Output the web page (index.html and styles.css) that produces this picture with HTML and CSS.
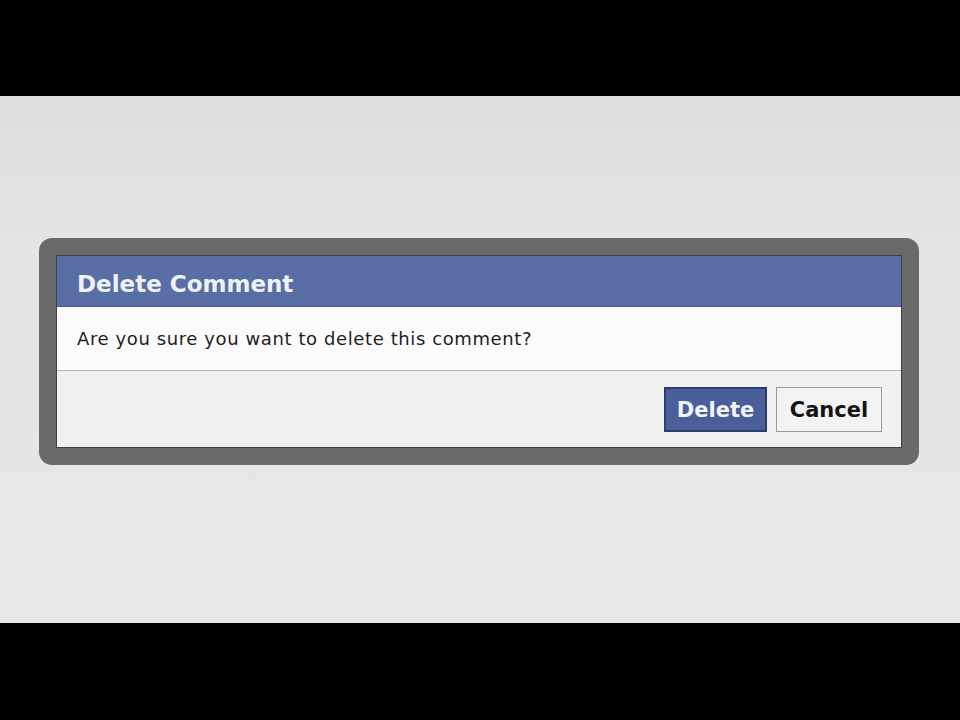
FILE: index.html
```html
<!DOCTYPE html>
<html>
<head>
<meta charset="utf-8">
<link rel="stylesheet" href="styles.css">
</head>
<body>
<div class="screen">
  <div class="bar"></div>
  <div class="stage">
    <div class="frame">
      <div class="dialog">
        <div class="title">Delete Comment</div>
        <div class="message">Are you sure you want to delete this comment?</div>
        <div class="footer">
          <button class="btn btn-primary">Delete</button>
          <button class="btn btn-secondary">Cancel</button>
        </div>
      </div>
    </div>
  </div>
  <div class="bar bar-bottom"></div>
</div>
</body>
</html>
```
FILE: styles.css
```css
html, body {
  margin: 0;
  padding: 0;
  background: #000;
}
.screen {
  width: 960px;
  height: 720px;
  display: flex;
  flex-direction: column;
  font-family: "DejaVu Sans", "Lucida Grande", sans-serif;
}
.bar {
  height: 96px;
  background: #000;
}
.bar-bottom {
  height: 97px;
}
.stage {
  height: 527px;
  background: linear-gradient(180deg, #dedede 0%, #e5e5e5 30%, #e6e7e8 100%);
  padding: 142px 0 0 39px;
  box-sizing: border-box;
}
.frame {
  width: 880px;
  padding: 17px;
  box-sizing: border-box;
  background: #6a6a6a;
  border-radius: 13px;
}
.dialog {
  border: 1px solid #3f3f45;
  background: #fafafa;
}
.title {
  height: 51px;
  box-sizing: border-box;
  background: #5a6ea6;
  color: #eef2f8;
  font-weight: bold;
  font-size: 23px;
  line-height: 50px;
  padding: 3px 0 0 20px;
  border-bottom: 1px solid #4a5c8e;
}
.message {
  height: 63px;
  line-height: 63px;
  padding-left: 20px;
  font-size: 18px;
  letter-spacing: 0.6px;
  color: #1e1e1e;
  background: #fbfbfb;
  border-bottom: 1px solid #b8b8b8;
}
.footer {
  height: 76px;
  background: #f1f1f1;
  display: flex;
  justify-content: flex-end;
  align-items: center;
  gap: 9px;
  padding-right: 19px;
}
.btn {
  height: 45px;
  font-family: "DejaVu Sans", "Lucida Grande", sans-serif;
  font-weight: bold;
  font-size: 21px;
  padding: 0;
  box-sizing: border-box;
  margin-top: 1px;
}
.btn-primary {
  width: 103px;
  background: #4a5f9a;
  color: #f2f4f8;
  border: 2px solid #2c3d6c;
}
.btn-secondary {
  width: 106px;
  background: #f3f3f3;
  color: #141414;
  border: 1px solid #9a9a9a;
}
```
